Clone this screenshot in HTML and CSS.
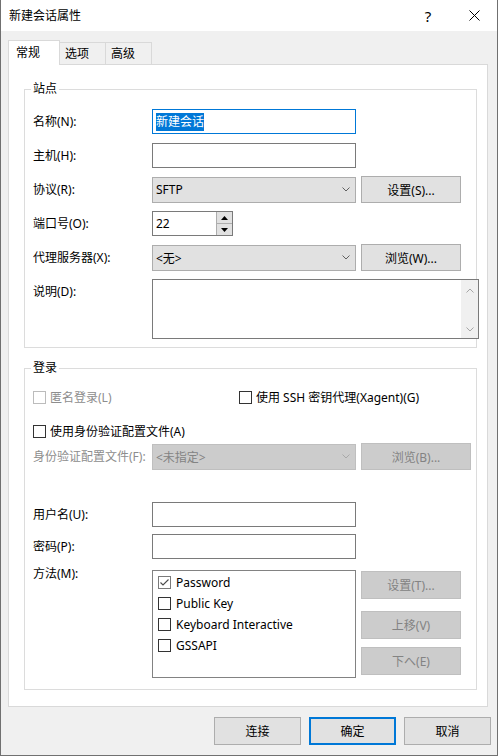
FILE: index.html
```html
<!DOCTYPE html>
<html lang="zh-CN">
<head>
    <meta charset="utf-8">
    <title>新建会话属性</title>
    <link rel="stylesheet" href="styles.css">
</head>
<body>
    <div class="window">
        <div class="titlebar">
            <span class="title">新建会话属性</span>
            <span class="caption-btn help">?</span>
            <span class="caption-btn close">
                <svg width="11" height="11" viewBox="0 0 11 11"><path d="M0.5 0.5 L10.5 10.5 M10.5 0.5 L0.5 10.5" stroke="#000" stroke-width="1" fill="none"/></svg>
            </span>
        </div>

        <div class="dialog-body">
            <!-- tab strip -->
            <div class="tabs">
                <div class="tab active">常规</div>
                <div class="tab">选项</div>
                <div class="tab">高级</div>
            </div>

            <div class="panel">
                <!-- site settings -->
                <fieldset class="group group-site">
                    <legend>站点</legend>
                    <div class="row first">
                        <label>名称(N):</label>
                        <div class="field focused"><span class="selected">新建会话</span></div>
                    </div>
                    <div class="row">
                        <label>主机(H):</label>
                        <div class="field"></div>
                    </div>
                    <div class="row">
                        <label>协议(R):</label>
                        <div class="combo">
                            <span>SFTP</span>
                            <svg width="8" height="5" viewBox="0 0 8 5"><path d="M0.5 0.5 L4 4 L7.5 0.5" stroke="#606060" fill="none"/></svg>
                        </div>
                        <button class="btn side">设置(S)...</button>
                    </div>
                    <div class="row">
                        <label>端口号(O):</label>
                        <div class="spin">
                            <span class="spin-value">22</span>
                            <span class="spin-btns">
                                <span class="spin-btn"><svg width="7" height="4" viewBox="0 0 7 4"><path d="M0 4 L3.5 0 L7 4 Z" fill="#000"/></svg></span>
                                <span class="spin-btn"><svg width="7" height="4" viewBox="0 0 7 4"><path d="M0 0 L3.5 4 L7 0 Z" fill="#000"/></svg></span>
                            </span>
                        </div>
                    </div>
                    <div class="row">
                        <label>代理服务器(X):</label>
                        <div class="combo">
                            <span>&lt;无&gt;</span>
                            <svg width="8" height="5" viewBox="0 0 8 5"><path d="M0.5 0.5 L4 4 L7.5 0.5" stroke="#606060" fill="none"/></svg>
                        </div>
                        <button class="btn side">浏览(W)...</button>
                    </div>
                    <div class="row tall">
                        <label>说明(D):</label>
                        <div class="memo">
                            <div class="memo-text"></div>
                            <div class="vscroll">
                                <svg width="8" height="5" viewBox="0 0 8 5"><path d="M0.5 4.5 L4 1 L7.5 4.5" stroke="#a6a6a6" fill="none"/></svg>
                                <svg width="8" height="5" viewBox="0 0 8 5"><path d="M0.5 0.5 L4 4 L7.5 0.5" stroke="#a6a6a6" fill="none"/></svg>
                            </div>
                        </div>
                    </div>
                </fieldset>

                <!-- login settings -->
                <fieldset class="group group-login">
                    <legend>登录</legend>
                    <div class="row first">
                        <div class="check-item anon disabled"><span class="box"></span>匿名登录(L)</div>
                        <div class="check-item"><span class="box"></span>使用 SSH 密钥代理(Xagent)(G)</div>
                    </div>
                    <div class="row">
                        <div class="check-item"><span class="box"></span>使用身份验证配置文件(A)</div>
                    </div>
                    <div class="row flush">
                        <label class="disabled">身份验证配置文件(F):</label>
                        <div class="combo disabled">
                            <span>&lt;未指定&gt;</span>
                            <svg width="8" height="5" viewBox="0 0 8 5"><path d="M0.5 0.5 L4 4 L7.5 0.5" stroke="#a8a8a8" fill="none"/></svg>
                        </div>
                        <button class="btn side wide" disabled>浏览(B)...</button>
                    </div>
                    <div class="row user">
                        <label>用户名(U):</label>
                        <div class="field"></div>
                    </div>
                    <div class="row pass">
                        <label>密码(P):</label>
                        <div class="field"></div>
                    </div>
                    <div class="row method">
                        <label>方法(M):</label>
                        <div class="method-list">
                            <div class="method-item">
                                <span class="box checked"><svg width="11" height="11" viewBox="0 0 11 11"><path d="M1.5 5.5 L4 8 L9.5 2.5" stroke="#4a4a4a" stroke-width="1.1" fill="none"/></svg></span>
                                Password
                            </div>
                            <div class="method-item"><span class="box"></span>Public Key</div>
                            <div class="method-item"><span class="box"></span>Keyboard Interactive</div>
                            <div class="method-item"><span class="box"></span>GSSAPI</div>
                        </div>
                        <div class="method-btns">
                            <button class="btn side" disabled>设置(T)...</button>
                            <button class="btn side up" disabled>上移(V)</button>
                            <button class="btn side down" disabled>下へ(E)</button>
                        </div>
                    </div>
                </fieldset>
            </div>

            <div class="actions">
                <button class="btn action">连接</button>
                <button class="btn action default">确定</button>
                <button class="btn action">取消</button>
            </div>
        </div>
    </div>
</body>
</html>
```

FILE: styles.css
```css
* {
    box-sizing: border-box;
}
body {
    margin: 0;
    background-color: #f0f0f0;
    font-family: "Noto Sans", "Noto Sans CJK SC", sans-serif;
    font-size: 12px;
    color: #000;
}
.window {
    width: 498px;
    height: 756px;
    border: 1px solid #707070;
    border-top: none;
    background-color: #f0f0f0;
}

/* title bar */
.titlebar {
    height: 31px;
    background-color: #fff;
    display: flex;
    align-items: center;
    padding-left: 8px;
}
.title {
    flex: 1;
    line-height: 16px;
}
.caption-btn {
    width: 46px;
    height: 31px;
    display: flex;
    align-items: center;
    justify-content: center;
}
.help {
    font-size: 15px;
}

.dialog-body {
    padding: 9px 9px 0 7px;
}

/* tabs */
.tabs {
    display: flex;
    align-items: flex-end;
    height: 25px;
    margin-bottom: -1px;
    position: relative;
    z-index: 1;
}
.tab {
    height: 22px;
    width: 46px;
    margin-bottom: 1px;
    padding-left: 5px;
    line-height: 21px;
    border: 1px solid #d9d9d9;
    border-left: none;
    border-bottom: none;
    background-color: #f0f0f0;
}
.tab.active {
    height: 25px;
    width: 52px;
    margin-bottom: 0;
    padding-left: 7px;
    line-height: 24px;
    border-left: 1px solid #d9d9d9;
    background-color: #fff;
}

.panel {
    width: 480px;
    height: 643px;
    background-color: #fff;
    border: 1px solid #d9d9d9;
}

/* group boxes */
.group {
    margin: 16px 10px 0 15px;
    padding: 0 8px 8px 8px;
    border: 1px solid #dcdcdc;
    min-width: 0;
}
.group legend {
    padding: 0 2px;
    margin-left: -2px;
    line-height: 16px;
}
.group-login {
    margin-top: 12px;
    padding-bottom: 11px;
}

.row {
    display: flex;
    align-items: center;
    height: 25px;
    margin-top: 9px;
}
.group-site .row.first {
    margin-top: 12px;
}
.row.tall {
    height: 60px;
    align-items: flex-start;
}
.row label {
    width: 119px;
    line-height: 25px;
    flex-shrink: 0;
    white-space: nowrap;
}
.disabled {
    color: #8d8d8d;
}

/* inputs */
.field {
    width: 204px;
    height: 25px;
    border: 1px solid #7a7a7a;
    padding-left: 3px;
    display: flex;
    align-items: center;
    flex-shrink: 0;
    background-color: #fff;
}
.field.focused {
    border-color: #0078d7;
}
.selected {
    background-color: #0078d7;
    color: #fff;
    line-height: 18px;
}
.combo {
    width: 204px;
    height: 26px;
    border: 1px solid #adadad;
    background-color: #e1e1e1;
    display: flex;
    align-items: center;
    justify-content: space-between;
    flex-shrink: 0;
    padding: 0 5px 0 3px;
}
.combo.disabled {
    background-color: #cccccc;
    border-color: #bfbfbf;
    color: #838383;
}

.spin {
    width: 81px;
    height: 25px;
    border: 1px solid #7a7a7a;
    display: flex;
    flex-shrink: 0;
}
.spin-value {
    flex: 1;
    padding-left: 3px;
    line-height: 23px;
}
.spin-btns {
    width: 16px;
    display: flex;
    flex-direction: column;
    border-left: 1px solid #adadad;
}
.spin-btn {
    flex: 1;
    display: flex;
    align-items: center;
    justify-content: center;
    background-color: #e1e1e1;
}
.spin-btn + .spin-btn {
    border-top: 1px solid #adadad;
}

.memo {
    width: 327px;
    height: 60px;
    border: 1px solid #7a7a7a;
    display: flex;
    flex-shrink: 0;
    background-color: #fff;
}
.memo-text {
    flex: 1;
}
.vscroll {
    width: 17px;
    background-color: #f0f0f0;
    display: flex;
    flex-direction: column;
    align-items: center;
    justify-content: space-between;
    padding: 8px 0 6px;
}

/* buttons */
.btn {
    font-family: inherit;
    font-size: 12px;
    color: #000;
    background-color: #e1e1e1;
    border: 1px solid #adadad;
    padding: 0;
    height: 27px;
}
.btn.side {
    width: 100px;
    margin-left: 5px;
    flex-shrink: 0;
}
.btn.wide {
    width: 110px;
}
.btn:disabled {
    background-color: #cccccc;
    border-color: #bfbfbf;
    color: #838383;
}

/* checkboxes */
.box {
    width: 13px;
    height: 13px;
    border: 1px solid #333;
    background-color: #fff;
    display: inline-flex;
    align-items: center;
    justify-content: center;
    flex-shrink: 0;
}
.check-item {
    display: flex;
    align-items: center;
    line-height: 25px;
    white-space: nowrap;
}
.check-item .box {
    margin-right: 4px;
}
.check-item.anon {
    width: 206px;
    flex-shrink: 0;
}
.check-item.disabled .box {
    border-color: #bcbcbc;
}

.group-login .row.first {
    margin-top: 9px;
}
.row.flush {
    margin-top: 0;
}
.row.user {
    margin-top: 33px;
}
.row.pass {
    margin-top: 7px;
}
.row.method {
    height: 108px;
    margin-top: 11px;
    align-items: flex-start;
}
.row.method label {
    line-height: 16px;
    margin-top: -4px;
}
.method-list {
    width: 204px;
    height: 108px;
    border: 1px solid #828282;
    padding: 1px 0 0 5px;
    flex-shrink: 0;
}
.method-item {
    display: flex;
    align-items: center;
    height: 21px;
}
.method-item .box {
    margin-right: 5px;
}
.box.checked {
    border-color: #7a7a7a;
}
.method-btns {
    display: flex;
    flex-direction: column;
}
.method-btns .btn {
    height: 28px;
    margin-top: 1px;
}
.method-btns .up {
    margin-top: 12px;
}
.method-btns .down {
    margin-top: 8px;
}

/* bottom buttons */
.actions {
    display: flex;
    justify-content: flex-end;
    gap: 8px;
    margin-top: 10px;
    margin-right: -3px;
}
.btn.action {
    width: 87px;
    height: 28px;
}
.btn.default {
    border: 2px solid #0078d7;
}
```
